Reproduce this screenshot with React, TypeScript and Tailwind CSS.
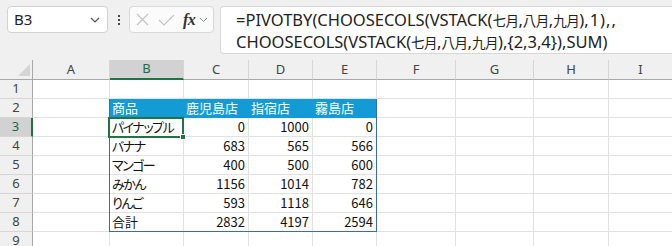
import React from "react";

const cols = [
  { w: 77, l: "A" },
  { w: 74, l: "B" },
  { w: 65, l: "C" },
  { w: 64, l: "D" },
  { w: 64, l: "E" },
  { w: 79, l: "F" },
  { w: 78, l: "G" },
  { w: 75, l: "H" },
  { w: 64, l: "I" },
];

const data: (string | number)[][] = [
  ["パイナップル", 0, 1000, 0],
  ["バナナ", 683, 565, 566],
  ["マンゴー", 400, 500, 600],
  ["みかん", 1156, 1014, 782],
  ["りんご", 593, 1118, 646],
  ["合計", 2832, 4197, 2594],
];

const gridFont = "[font-family:'Noto_Sans_CJK_JP',sans-serif] [font-feature-settings:'palt']";

function Cell({ children, className = "" }: { children?: React.ReactNode; className?: string }) {
  return (
    <div className={`h-[19px] border-r border-b border-[#e1e1e1] bg-white flex items-center overflow-hidden whitespace-nowrap ${className}`}>
      {children}
    </div>
  );
}

function K({ children }: { children: React.ReactNode }) {
  return <span className="text-[13.5px] [font-family:'Noto_Sans_CJK_JP',sans-serif] tracking-[-0.5px]">{children}</span>;
}

export default function App() {
  const rows = Array.from({ length: 9 }, (_, i) => i + 1);
  return (
    <div className="w-[672px] h-[246px] overflow-hidden bg-[#f0f0f0] relative">
      {/* toolbar */}
      <div className="h-[60px] flex items-start pt-[6px] pl-[7px]">
        <div className="w-[101px] h-[27px] bg-white border border-[#d2d2d2] rounded-[4px] flex items-center justify-between pl-[6px] pr-[6px]">
          <span className="text-[15px] text-[#222] [font-family:'Noto_Sans',sans-serif] leading-none">B3</span>
          <svg width="10" height="6" viewBox="0 0 10 6" className="mr-[1px]">
            <path d="M1 1 L5 5 L9 1" fill="none" stroke="#555" strokeWidth="1.2" />
          </svg>
        </div>
        <div className="w-[21px] h-[27px] flex flex-col items-center justify-center gap-[2px]">
          <div className="w-[2px] h-[2px] bg-[#444]" />
          <div className="w-[2px] h-[2px] bg-[#444]" />
          <div className="w-[2px] h-[2px] bg-[#444]" />
        </div>
        <div className="w-[85px] h-[27px] bg-[#fbfbfb] border border-[#d8d8d8] rounded-[4px] flex items-center pl-[6px]">
          <svg width="13" height="13" viewBox="0 0 13 13">
            <path d="M1 1 L12 12 M12 1 L1 12" stroke="#c4c4c4" strokeWidth="1.2" fill="none" />
          </svg>
          <svg width="17" height="12" viewBox="0 0 17 12" className="ml-[9px]">
            <path d="M1 6 L6 11 L16 1" stroke="#c4c4c4" strokeWidth="1.2" fill="none" />
          </svg>
          <span className="ml-[8px] text-[16px] italic text-[#333] [font-family:'Liberation_Serif',serif] leading-none font-semibold tracking-[-0.5px]">fx</span>
          <svg width="9" height="6" viewBox="0 0 9 6" className="ml-[4px]">
            <path d="M1 1 L4.5 4.5 L8 1" fill="none" stroke="#888" strokeWidth="1" />
          </svg>
        </div>
        <div className="ml-[6px] flex-1 h-[48px] bg-white border border-[#d8d8d8] rounded-l-[4px] border-r-0 pl-[15px] pt-[2px] text-[16.5px] leading-[21px] text-[#222] [font-family:'Noto_Sans',sans-serif] whitespace-nowrap">
          <div>
            =PIVOTBY(CHOOSECOLS(VSTACK(<K>七月</K>,<K>八月</K>,<K>九月</K>)<span className="tracking-[1px]">,1),,</span>
          </div>
          <div>
            CHOOSECOLS(VSTACK(<K>七月</K>,<K>八月</K>,<K>九月</K>),{"{"}2,3,4{"}"}),SUM)
          </div>
        </div>
      </div>

      {/* grid */}
      <div className={`relative grid grid-cols-[33px_77px_74px_65px_64px_64px_79px_78px_75px_64px] ${gridFont}`}>
        {/* header row */}
        <div className="h-[20px] bg-[#f0f0f0] border-r border-b border-[#a8a8a8] relative">
          <svg width="12" height="12" viewBox="0 0 12 12" className="absolute left-[18px] top-[4px]">
            <path d="M12 0 L12 12 L0 12 Z" fill="#d4d4d4" />
          </svg>
        </div>
        {cols.map((c) => (
          <div
            key={c.l}
            className={`h-[20px] flex items-center justify-center text-[13px] [font-family:'Noto_Sans',sans-serif] border-r border-[#d6d6d6] ${
              c.l === "B"
                ? "bg-[#d2d2d2] text-[#1e6b40] border-b-2 border-b-[#217346]"
                : "bg-[#f0f0f0] text-[#444] border-b border-b-[#a8a8a8]"
            }`}
          >
            {c.l}
          </div>
        ))}

        {rows.map((r) => {
          const hdr = (
            <div
              key={`h${r}`}
              className={`h-[19px] flex items-center justify-center text-[13px] [font-family:'Noto_Sans',sans-serif] border-b border-[#d6d6d6] ${
                r === 3
                  ? "bg-[#d2d2d2] text-[#1e6b40] border-r-2 border-r-[#217346]"
                  : "bg-[#f0f0f0] text-[#444] border-r border-r-[#a8a8a8]"
              }`}
            >
              {r}
            </div>
          );
          const cells: React.ReactNode[] = [];
          for (let ci = 0; ci < 9; ci++) {
            let content: React.ReactNode = null;
            let cls = "";
            if (r === 2 && ci >= 1 && ci <= 4) {
              const h = ["商品", "鹿児島店", "指宿店", "霧島店"][ci - 1];
              content = h;
              cls = "!bg-[#139bd6] !border-[#139bd6] text-white text-[13px] pl-[2px]";
            } else if (r >= 3 && r <= 8 && ci >= 1 && ci <= 4) {
              const v = data[r - 3][ci - 1];
              content = v;
              cls =
                ci === 1
                  ? r === 8
                    ? "text-[13px] text-[#111] pl-[2px]"
                    : "text-[13px] text-[#111] pl-[2px] tracking-[-1.5px]"
                  : "text-[13px] text-[#111] justify-end pr-[3px]";
            }
            cells.push(
              <Cell key={`${r}-${ci}`} className={cls}>
                {content}
              </Cell>
            );
          }
          return (
            <React.Fragment key={r}>
              {hdr}
              {cells}
            </React.Fragment>
          );
        })}

        {/* table outline */}
        <div className="absolute left-[109px] top-[39px] w-[268px] h-[133px] border border-[#3c68b8] border-t-0 pointer-events-none" />
        {/* selection */}
        <div className="absolute left-[108px] top-[57px] w-[76px] h-[21px] border-2 border-[#217346] pointer-events-none" />
        <div className="absolute left-[180px] top-[74px] w-[6px] h-[6px] bg-[#217346] border border-white pointer-events-none" />
      </div>
    </div>
  );
}
